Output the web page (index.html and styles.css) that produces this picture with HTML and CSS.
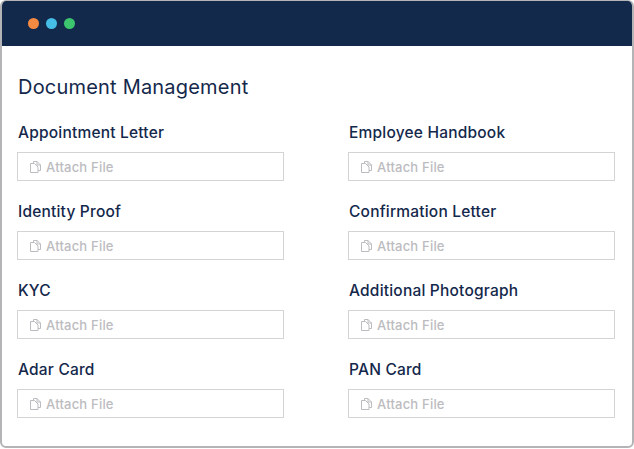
FILE: index.html
```html
<!DOCTYPE html>
<html lang="en">
<head>
  <meta charset="UTF-8">
  <title>Document Management</title>
  <link rel="stylesheet" href="styles.css">
</head>
<body>
  <svg width="0" height="0" class="icon-defs">
    <symbol id="copy" viewBox="0 0 11 12">
      <path d="M3.500 2.500V.5H7L10.500 4V9.500H8" fill="none" stroke="currentColor"/>
      <path d="M7 .5V4H10.500" fill="none" stroke="currentColor"/>
      <path d="M.5 2.500H4.500L8 6V11.500H.5z" fill="none" stroke="currentColor"/>
    </symbol>
  </svg>

  <div class="window">
    <!-- Title bar -->
    <div class="titlebar">
      <span class="dot orange"></span>
      <span class="dot blue"></span>
      <span class="dot green"></span>
    </div>

    <div class="content">
      <h1>Document Management</h1>

      <div class="fields">
        <div class="field">
          <label>Appointment Letter</label>
          <div class="attach"><svg class="attach-icon"><use href="#copy"></use></svg>Attach File</div>
        </div>
        <div class="field">
          <label>Employee Handbook</label>
          <div class="attach"><svg class="attach-icon"><use href="#copy"></use></svg>Attach File</div>
        </div>
        <div class="field">
          <label>Identity Proof</label>
          <div class="attach"><svg class="attach-icon"><use href="#copy"></use></svg>Attach File</div>
        </div>
        <div class="field">
          <label>Confirmation Letter</label>
          <div class="attach"><svg class="attach-icon"><use href="#copy"></use></svg>Attach File</div>
        </div>
        <div class="field">
          <label>KYC</label>
          <div class="attach"><svg class="attach-icon"><use href="#copy"></use></svg>Attach File</div>
        </div>
        <div class="field">
          <label>Additional Photograph</label>
          <div class="attach"><svg class="attach-icon"><use href="#copy"></use></svg>Attach File</div>
        </div>
        <div class="field">
          <label>Adar Card</label>
          <div class="attach"><svg class="attach-icon"><use href="#copy"></use></svg>Attach File</div>
        </div>
        <div class="field">
          <label>PAN Card</label>
          <div class="attach"><svg class="attach-icon"><use href="#copy"></use></svg>Attach File</div>
        </div>
      </div>
    </div>
  </div>
</body>
</html>
```

FILE: styles.css
```css
/* Global styles */
body {
  font-family: 'Inter', 'Liberation Sans', sans-serif;
  margin: 0;
  padding: 0;
  background-color: #ffffff;
  color: #14284b;
}

.icon-defs {
  display: block;
  height: 0;
}

/* Window frame */
.window {
  width: 634px;
  height: 448px;
  box-sizing: border-box;
  border: 2px solid #b4b4b6;
  border-top-width: 1px;
  border-radius: 6px;
  overflow: hidden;
  background-color: #ffffff;
}

.titlebar {
  height: 45px;
  display: flex;
  align-items: center;
  gap: 7px;
  padding-left: 26px;
  box-sizing: border-box;
  background-color: #12294b;
}

.dot {
  width: 11px;
  height: 11px;
  border-radius: 50%;
}

.orange { background-color: #f58a42; }
.blue { background-color: #45bde6; }
.green { background-color: #3cc46f; }

/* Content */
.content {
  padding: 27px 0 0 15px;
}

h1 {
  font-size: 20px;
  font-weight: 400;
  line-height: 28px;
  letter-spacing: 0.2px;
  margin: 0 0 22px 1px;
}

.fields {
  display: grid;
  grid-template-columns: 267px 267px;
  column-gap: 64px;
  row-gap: 21px;
}

.field label {
  display: block;
  font-size: 15.5px;
  font-weight: 500;
  line-height: 20px;
  letter-spacing: 0.2px;
  margin: 0 0 9px 1px;
}

.attach {
  height: 29px;
  box-sizing: border-box;
  display: flex;
  align-items: center;
  gap: 5px;
  padding-left: 12px;
  border: 1.5px solid #d4d4d6;
  font-size: 13px;
  font-weight: 500;
  letter-spacing: 0.2px;
  color: #bcbcc0;
}

.attach-icon {
  width: 11px;
  height: 12px;
  color: #bcbcc0;
}
```
